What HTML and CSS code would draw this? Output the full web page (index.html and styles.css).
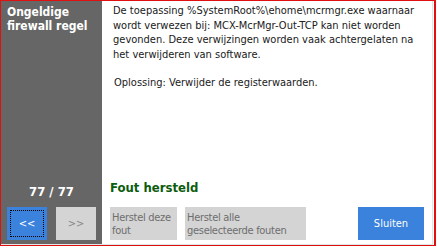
FILE: index.html
```html
<!DOCTYPE html>
<html>
<head>
    <title>Ongeldige firewall regel</title>
    <link rel="stylesheet" href="styles.css">
</head>
<body>
    <div class="frame">
        <div class="window">
            <div class="sidebar">
                <h1 class="title">Ongeldige firewall regel</h1>
                <div class="counter">77 / 77</div>
                <div class="nav">
                    <button class="nav-btn active"><span class="focus">&lt;&lt;</span></button>
                    <button class="nav-btn">&gt;&gt;</button>
                </div>
            </div>
            <div class="content">
                <p class="message">De toepassing %SystemRoot%\ehome\mcrmgr.exe waarnaar wordt verwezen bij: MCX-McrMgr-Out-TCP kan niet worden gevonden. Deze verwijzingen worden vaak achtergelaten na het verwijderen van software.</p>
                <p class="solution">Oplossing: Verwijder de registerwaarden.</p>
                <div class="status">Fout hersteld</div>
                <div class="actions">
                    <button class="btn disabled small">Herstel deze fout</button>
                    <button class="btn disabled wide">Herstel alle geselecteerde fouten</button>
                    <button class="btn primary">Sluiten</button>
                </div>
            </div>
        </div>
    </div>
</body>
</html>
```

FILE: styles.css
```css
body {
    margin: 0;
    background-color: #ffffff;
    font-family: "DejaVu Sans Condensed", "DejaVu Sans", sans-serif;
    font-size: 11px;
}

.frame {
    width: 436px;
    height: 246px;
    box-sizing: border-box;
    border: 1px solid #e01010;
    border-right-width: 2px;
}

.window {
    display: flex;
    height: 100%;
    box-sizing: border-box;
    border-right: 1px solid #e4e4e4;
    border-bottom: 1px solid #e4e4e4;
    margin-right: 1px;
    margin-bottom: 2px;
}

.sidebar {
    width: 101px;
    background-color: #666666;
    color: #ffffff;
    display: flex;
    flex-direction: column;
    padding: 4px 6px 4px 6px;
    box-sizing: border-box;
}

.title {
    margin: 0;
    font-size: 12px;
    font-weight: bold;
    line-height: 14px;
}

.counter {
    margin-top: auto;
    text-align: center;
    font-weight: bold;
    font-size: 13px;
    margin-bottom: 8px;
}

.nav {
    display: flex;
    justify-content: space-between;
}

.nav-btn {
    width: 40px;
    height: 33px;
    border: none;
    background-color: #d4d4d4;
    color: #888888;
    font-family: inherit;
    font-size: 11px;
    padding: 0;
}

.nav-btn.active {
    background-color: #3b82dc;
    color: #ffffff;
    padding: 3px;
}

.focus {
    display: flex;
    align-items: center;
    justify-content: center;
    height: 100%;
    border: 1px dotted #000000;
    box-sizing: border-box;
}

.content {
    flex: 1;
    display: flex;
    flex-direction: column;
    padding: 3px 8px 4px 8px;
    color: #202020;
}

.message {
    margin: 0 0 0 3px;
    line-height: 14.5px;
}

.solution {
    margin: 14px 0 0 4px;
}

.status {
    margin-top: auto;
    color: #0d5c0d;
    font-weight: bold;
    font-size: 13px;
    margin-bottom: 12px;
}

.actions {
    display: flex;
    gap: 8px;
}

.btn {
    height: 33px;
    border: none;
    font-family: inherit;
    font-size: 11px;
    letter-spacing: -0.3px;
    text-align: left;
    padding: 0 2px;
    line-height: 13px;
}

.btn.disabled {
    background-color: #d4d4d4;
    color: #6e6e6e;
}

.small {
    width: 67px;
}

.wide {
    width: 121px;
}

.btn.primary {
    margin-left: auto;
    width: 66px;
    background-color: #3b82dc;
    color: #ffffff;
    text-align: center;
    letter-spacing: 0;
}
```
